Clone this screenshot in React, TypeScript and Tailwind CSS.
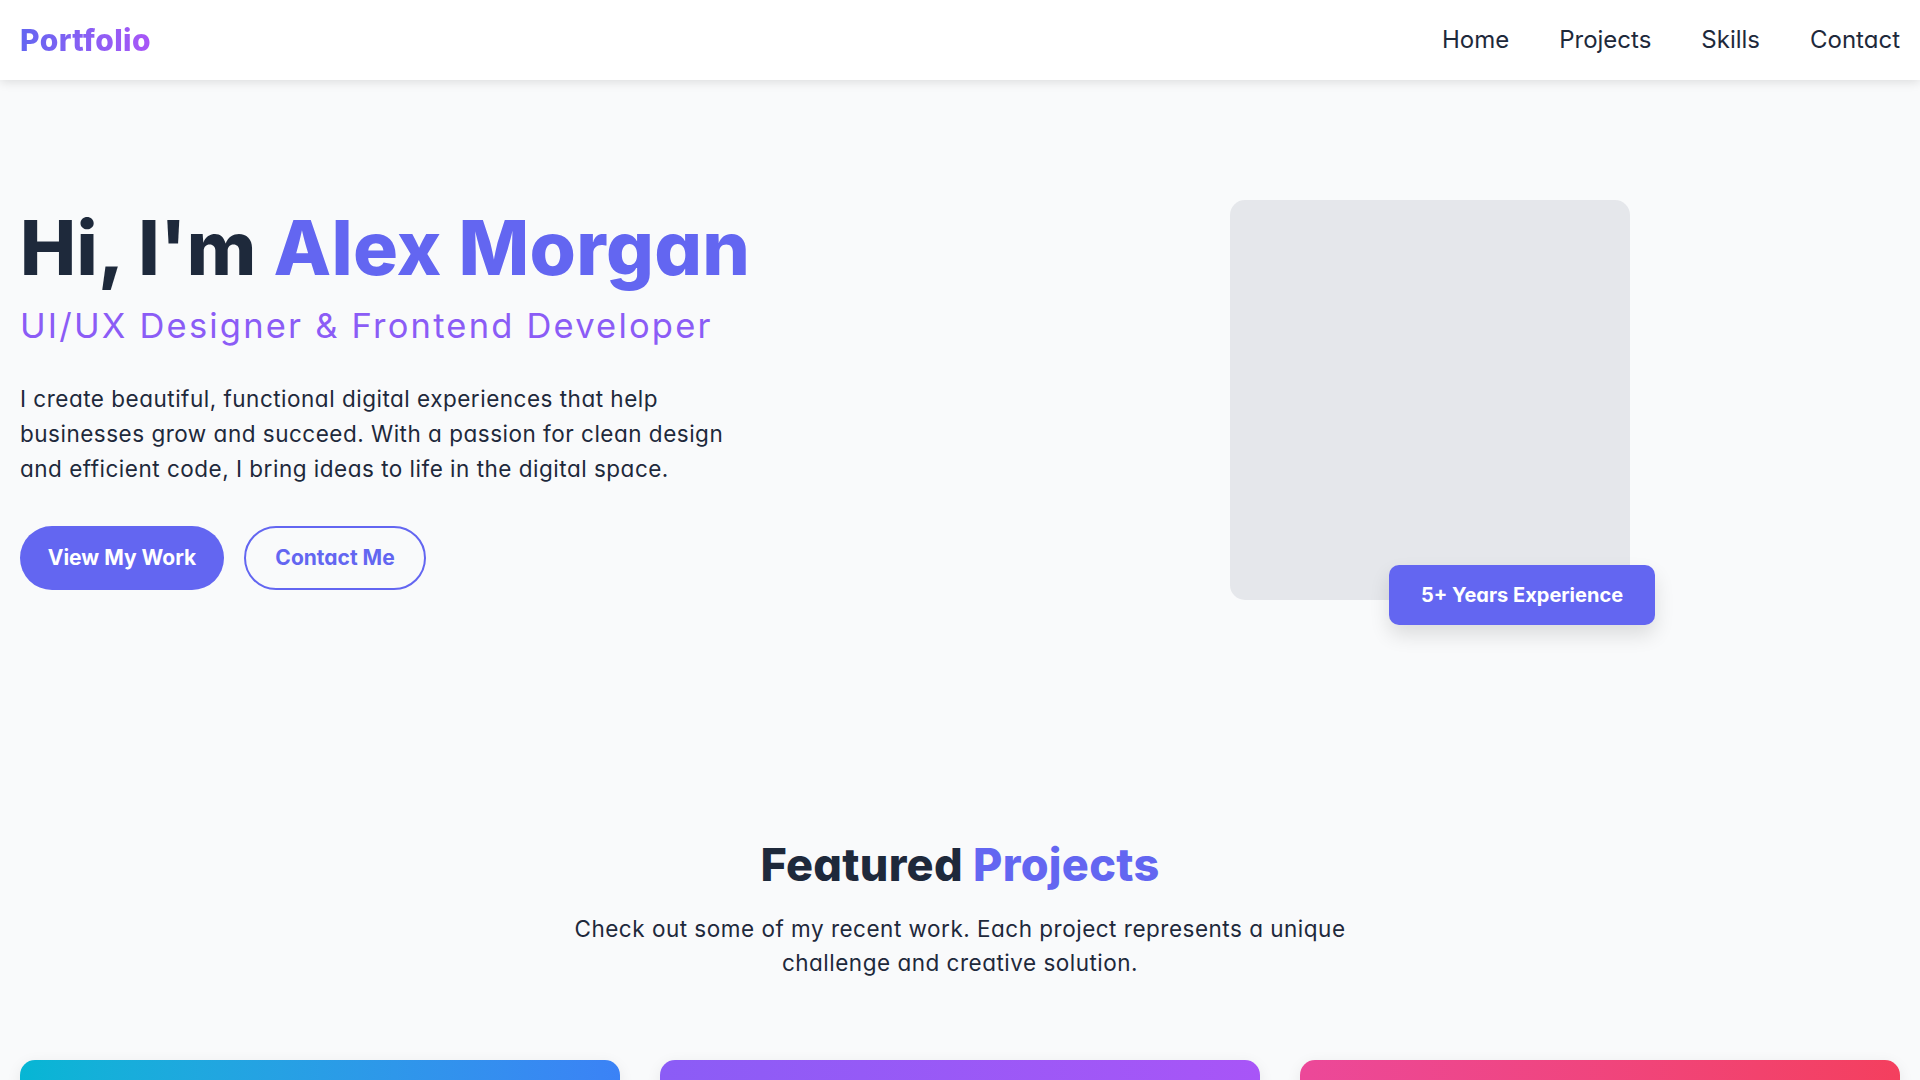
import React from "react";

const projects = [
  {
    title: "E-Commerce Dashboard",
    text: "A modern analytics dashboard for online stores with real-time sales tracking and reporting.",
    grad: "bg-linear-to-r from-[#06b6d4] to-[#3b82f6]",
  },
  {
    title: "Fitness Tracking App",
    text: "A mobile-first application that helps users plan workouts and monitor their progress.",
    grad: "bg-linear-to-r from-[#8b5cf6] to-[#a855f7]",
  },
  {
    title: "Travel Booking Platform",
    text: "A seamless booking experience for flights, hotels and tours with smart recommendations.",
    grad: "bg-linear-to-r from-[#ec4899] to-[#f43f5e]",
  },
];

const skills = [
  { name: "UI Design", level: 95 },
  { name: "React", level: 90 },
  { name: "TypeScript", level: 85 },
  { name: "Tailwind CSS", level: 92 },
  { name: "Figma", level: 96 },
  { name: "Node.js", level: 75 },
];

export default function App() {
  return (
    <div className="min-h-screen bg-[#f9fafb] font-[Inter,'Noto_Sans',sans-serif] text-[#1e293b] [font-feature-settings:'cv11']">
      <header className="sticky top-0 z-20 h-[80px] bg-white shadow-[0_2px_10px_rgba(0,0,0,0.12)]">
        <div className="flex h-full items-center justify-between px-[20px]">
          <a className="bg-linear-to-r from-[#6366f1] to-[#a855f7] bg-clip-text text-[30px] font-extrabold leading-[40px] tracking-[0.4px] text-transparent">
            Portfolio
          </a>
          <nav className="flex gap-[50px] text-[24px] leading-[32px] text-[#1e293b]">
            <a>Home</a>
            <a>Projects</a>
            <a>Skills</a>
            <a>Contact</a>
          </nav>
        </div>
      </header>

      <section className="px-[20px] py-[120px]">
        <div className="flex items-center">
          <div className="flex-1 pb-[7px]">
            <h1 className="text-[75px] font-extrabold leading-[90px] tracking-[0.3px] text-[#1e293b]">
              Hi, I'm <span className="text-[#6366f1]">Alex Morgan</span>
            </h1>
            <p className="mt-[7px] text-[34.5px] leading-[52px] tracking-[2.2px] text-[#8b5cf6]">
              UI/UX Designer &amp; Frontend Developer
            </p>
            <p className="mt-[29px] max-w-[780px] text-[22.5px] leading-[35px] tracking-[0.5px] text-[#1e293b]">
              I create beautiful, functional digital experiences that help
              <br />
              businesses grow and succeed. With a passion for clean design
              <br />
              and efficient code, I bring ideas to life in the digital space.
            </p>
            <div className="mt-[40px] flex gap-[20px]">
              <a className="flex h-[64px] w-[204px] items-center justify-center rounded-full bg-[#6366f1] text-[21px] font-bold text-white">
                View My Work
              </a>
              <a className="flex h-[64px] w-[182px] items-center justify-center rounded-full border-2 border-[#6366f1] text-[21px] font-bold text-[#6366f1]">
                Contact Me
              </a>
            </div>
          </div>
          <div className="flex flex-1 justify-center">
            <div className="relative h-[400px] w-[400px] rounded-[15px] bg-[#e5e7eb]">
              <div className="absolute -bottom-[25px] -right-[25px] flex h-[60px] w-[266px] items-center justify-center rounded-[10px] bg-[#6366f1] text-[20px] font-bold text-white shadow-[0_10px_20px_rgba(0,0,0,0.12)]">
                5+ Years Experience
              </div>
            </div>
          </div>
        </div>
      </section>

      <section className="px-[20px] pb-[120px] pt-[118px]">
        <h2 className="text-center text-[45px] font-extrabold leading-[54px] tracking-[0.3px] text-[#1e293b]">
          Featured <span className="text-[#6366f1]">Projects</span>
        </h2>
        <p className="mx-auto mt-[20px] max-w-[860px] text-center text-[22.5px] leading-[34px] tracking-[0.5px] text-[#1e293b]">
          Check out some of my recent work. Each project represents a unique
          <br />
          challenge and creative solution.
        </p>
        <div className="mt-[80px] grid grid-cols-3 gap-[40px]">
          {projects.map((p) => (
            <div key={p.title} className="overflow-hidden rounded-[15px] bg-white shadow-[0_4px_15px_rgba(0,0,0,0.08)]">
              <div className={`h-[250px] ${p.grad}`} />
              <div className="p-[30px]">
                <h3 className="text-[26px] font-semibold">{p.title}</h3>
                <p className="mt-[12px] text-[20px] leading-[32px] text-[#4b5563]">{p.text}</p>
                <div className="mt-[20px] flex gap-[10px] text-[16px]">
                  <span className="rounded-full bg-[#eef2ff] px-[14px] py-[5px] text-[#6366f1]">React</span>
                  <span className="rounded-full bg-[#eef2ff] px-[14px] py-[5px] text-[#6366f1]">Tailwind</span>
                  <span className="rounded-full bg-[#eef2ff] px-[14px] py-[5px] text-[#6366f1]">Figma</span>
                </div>
              </div>
            </div>
          ))}
        </div>
      </section>

      <section className="bg-white px-[20px] py-[120px]">
        <h2 className="text-center text-[45px] font-extrabold leading-[54px]">
          My <span className="text-[#6366f1]">Skills</span>
        </h2>
        <p className="mx-auto mt-[20px] max-w-[820px] text-center text-[22.5px] leading-[34px]">
          Tools and technologies I use every day to design and build products.
        </p>
        <div className="mx-auto mt-[80px] grid max-w-[1400px] grid-cols-2 gap-x-[80px] gap-y-[50px]">
          {skills.map((s) => (
            <div key={s.name}>
              <div className="flex justify-between text-[22px] font-medium">
                <span>{s.name}</span>
                <span className="text-[#6366f1]">{s.level}%</span>
              </div>
              <div className="mt-[12px] h-[12px] rounded-full bg-[#e5e7eb]">
                <div className="h-full rounded-full bg-linear-to-r from-[#6366f1] to-[#a855f7]" style={{ width: `${s.level}%` }} />
              </div>
            </div>
          ))}
        </div>
      </section>

      <section className="px-[20px] py-[120px]">
        <h2 className="text-center text-[45px] font-extrabold leading-[54px]">
          Get In <span className="text-[#6366f1]">Touch</span>
        </h2>
        <p className="mx-auto mt-[20px] max-w-[820px] text-center text-[22.5px] leading-[34px]">
          Have a project in mind? Let's work together to make it happen.
        </p>
        <div className="mx-auto mt-[80px] flex max-w-[900px] flex-col gap-[25px] rounded-[15px] bg-white p-[50px] shadow-[0_4px_15px_rgba(0,0,0,0.08)]">
          <div className="h-[64px] rounded-[10px] border border-[#e5e7eb]" />
          <div className="h-[64px] rounded-[10px] border border-[#e5e7eb]" />
          <div className="h-[220px] rounded-[10px] border border-[#e5e7eb]" />
          <div className="flex h-[64px] w-[220px] items-center justify-center rounded-full bg-[#6366f1] text-[21px] font-semibold text-white">
            Send Message
          </div>
        </div>
      </section>

      <footer className="bg-[#1e293b] px-[20px] py-[60px] text-center text-[20px] text-[#cbd5e1]">
        © 2024 Alex Morgan. All rights reserved.
      </footer>
    </div>
  );
}
